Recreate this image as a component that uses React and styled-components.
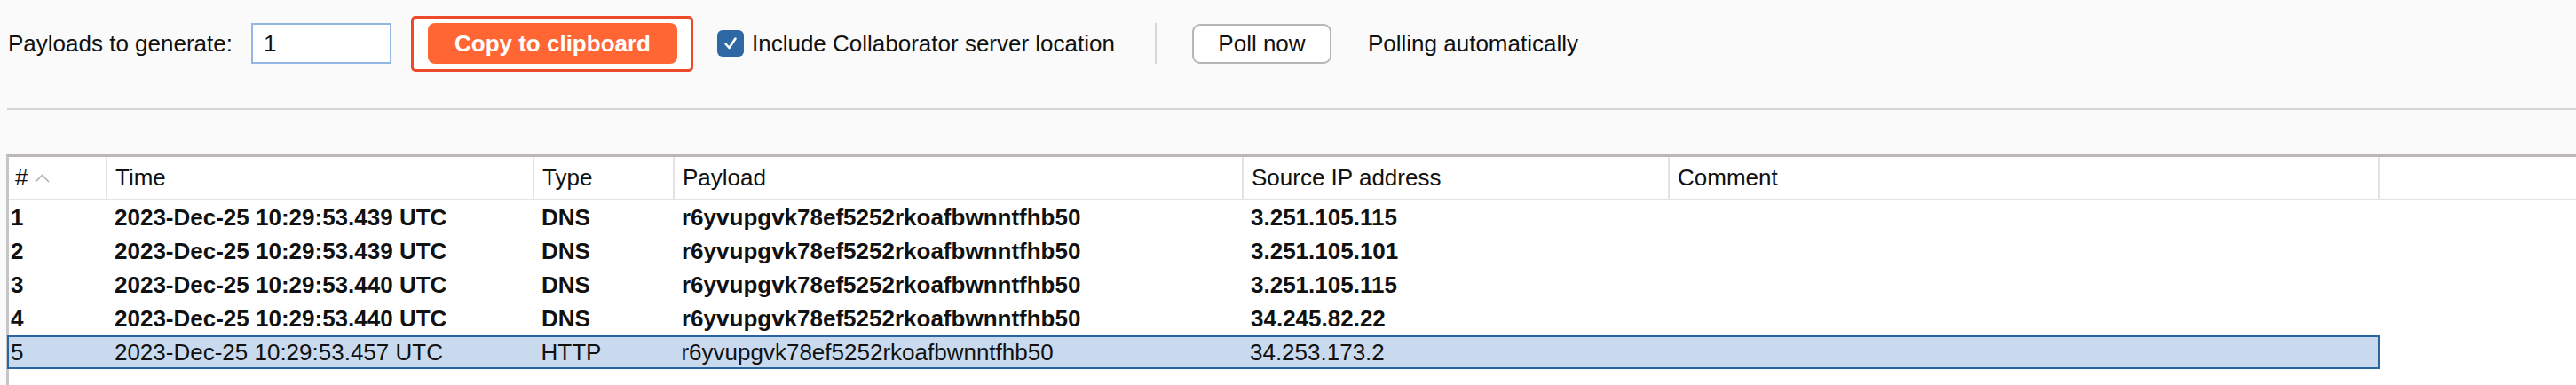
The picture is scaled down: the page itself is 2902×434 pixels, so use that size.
import React from "react"
import styled, { createGlobalStyle } from "styled-components"

const GlobalStyle = createGlobalStyle`
    html, body {
        margin: 0;
        padding: 0;
        background: #fafafa;
    }
    body {
        font-family: "Liberation Sans", Arial, sans-serif;
        font-size: 26px;
        color: #111;
    }
`

const Page = styled.div`
    display: flex;
    flex-direction: column;
    height: 100vh;
    background: #fafafa;
`

const Toolbar = styled.div`
    display: flex;
    align-items: center;
    height: 98px;
    padding-left: 9px;
    white-space: nowrap;
`

const Label = styled.span`
    font-size: 26px;
    margin-right: ${(props) => props.gap || 0}px;
`

const NumberInput = styled.input`
    box-sizing: border-box;
    width: 158px;
    height: 46px;
    border: 2px solid #93b7e2;
    background: #fff;
    padding: 0 12px;
    font-family: "Liberation Sans", Arial, sans-serif;
    font-size: 26px;
    color: #111;
    outline: none;
    margin-right: 22px;
`

const FocusRing = styled.div`
    box-sizing: border-box;
    display: flex;
    align-items: center;
    height: 63px;
    padding: 0 15px 0 16px;
    border: 3px solid #ec4a2b;
    border-radius: 5px;
    background: #fff;
    margin-right: 27px;
`

const PrimaryButton = styled.button`
    width: 281px;
    height: 46px;
    border: none;
    border-radius: 8px;
    background: #ff6633;
    color: #fff;
    font-family: "Liberation Sans", Arial, sans-serif;
    font-weight: bold;
    font-size: 26px;
    padding: 0;
`

const CheckRow = styled.label`
    display: flex;
    align-items: center;
    gap: 9px;
    margin-right: 45px;
`

const CheckBox = styled.span`
    display: flex;
    align-items: center;
    justify-content: center;
    width: 30px;
    height: 30px;
    border-radius: 6px;
    background: #2d68a4;
`

const VSep = styled.div`
    width: 2px;
    height: 46px;
    background: #d6d6d6;
    margin-right: 40px;
`

const GhostButton = styled.button`
    box-sizing: border-box;
    width: 157px;
    height: 45px;
    border: 2px solid #b9b4b5;
    border-radius: 9px;
    background: #fff;
    font-family: "Liberation Sans", Arial, sans-serif;
    font-size: 26px;
    color: #111;
    padding: 0;
    margin-right: 41px;
`

const Divider = styled.div`
    height: 2px;
    background: #d3d3d3;
    margin: 24px 0 0 8px;
`

const Table = styled.div`
    flex: 1;
    margin: 50px 0 0 7px;
    border-top: 3px solid #bbb7b8;
    border-left: 3px solid #c6c6c6;
    background: #fff;
`

const HeaderRow = styled.div`
    display: flex;
    height: 47px;
    border-bottom: 2px solid #e3e3e3;
`

const HeaderCell = styled.div`
    box-sizing: border-box;
    display: flex;
    align-items: center;
    gap: 8px;
    width: ${(props) => props.w}px;
    flex: ${(props) => (props.w ? "none" : "1")};
    padding-left: ${(props) => (props.first ? 7 : 9)}px;
    border-right: ${(props) => (props.w ? "2px solid #e3e3e3" : "none")};
    font-size: 26px;
    color: #111;
`

const Row = styled.div`
    box-sizing: border-box;
    display: flex;
    align-items: center;
    height: 38px;
    font-weight: ${(props) => (props.selected ? "normal" : "bold")};
    background: ${(props) => (props.selected ? "#c9daef" : "transparent")};
    border: ${(props) => (props.selected ? "2px solid #2a65a0" : "none")};
    margin-left: ${(props) => (props.selected ? "-2px" : "0")};
    width: ${(props) => (props.selected ? 2673 : 2671)}px;
`

const Cell = styled.div`
    box-sizing: border-box;
    width: ${(props) => props.w}px;
    padding-left: ${(props) => (props.first ? 2 : 8)}px;
    font-size: 26px;
    color: #111;
    white-space: nowrap;
    overflow: hidden;
`

const columns = [
    { name: "#", w: 111 },
    { name: "Time", w: 481 },
    { name: "Type", w: 158 },
    { name: "Payload", w: 641 },
    { name: "Source IP address", w: 480 },
    { name: "Comment", w: 800 },
]

const payload = "r6yvupgvk78ef5252rkoafbwnntfhb50"

const interactions = [
    { id: 1, time: "2023-Dec-25 10:29:53.439 UTC", type: "DNS", ip: "3.251.105.115" },
    { id: 2, time: "2023-Dec-25 10:29:53.439 UTC", type: "DNS", ip: "3.251.105.101" },
    { id: 3, time: "2023-Dec-25 10:29:53.440 UTC", type: "DNS", ip: "3.251.105.115" },
    { id: 4, time: "2023-Dec-25 10:29:53.440 UTC", type: "DNS", ip: "34.245.82.22" },
    { id: 5, time: "2023-Dec-25 10:29:53.457 UTC", type: "HTTP", ip: "34.253.173.2", selected: true },
]

const SortArrow = () => (
    <svg width="17" height="10" viewBox="0 0 17 10">
        <polyline points="1,9 8.5,1.5 16,9" fill="none" stroke="#b3b3b3" strokeWidth="1.6" />
    </svg>
)

const Check = () => (
    <svg width="18" height="18" viewBox="0 0 18 18">
        <polyline points="3.5,9.5 7.5,14 14.5,3.5" fill="none" stroke="#fff" strokeWidth="2.6" strokeLinecap="round" strokeLinejoin="round" />
    </svg>
)

const App = () => {

    return (
        <Page>
            <GlobalStyle />
            <Toolbar>
                <Label gap={21}>Payloads to generate:</Label>
                <NumberInput defaultValue="1" />
                <FocusRing>
                    <PrimaryButton>Copy to clipboard</PrimaryButton>
                </FocusRing>
                <CheckRow>
                    <CheckBox><Check /></CheckBox>
                    <Label>Include Collaborator server location</Label>
                </CheckRow>
                <VSep />
                <GhostButton>Poll now</GhostButton>
                <Label>Polling automatically</Label>
            </Toolbar>
            <Divider />
            <Table>
                <HeaderRow>
                    {columns.map((col, i) => (
                        <HeaderCell key={col.name} w={col.w} first={i === 0}>
                            {col.name}
                            {i === 0 && <SortArrow />}
                        </HeaderCell>
                    ))}
                    <HeaderCell />
                </HeaderRow>
                {interactions.map((item) => (
                    <Row key={item.id} selected={item.selected}>
                        <Cell w={columns[0].w} first>{item.id}</Cell>
                        <Cell w={columns[1].w}>{item.time}</Cell>
                        <Cell w={columns[2].w}>{item.type}</Cell>
                        <Cell w={columns[3].w}>{payload}</Cell>
                        <Cell w={columns[4].w}>{item.ip}</Cell>
                        <Cell w={columns[5].w}></Cell>
                    </Row>
                ))}
            </Table>
        </Page>
    )
}

export default App
